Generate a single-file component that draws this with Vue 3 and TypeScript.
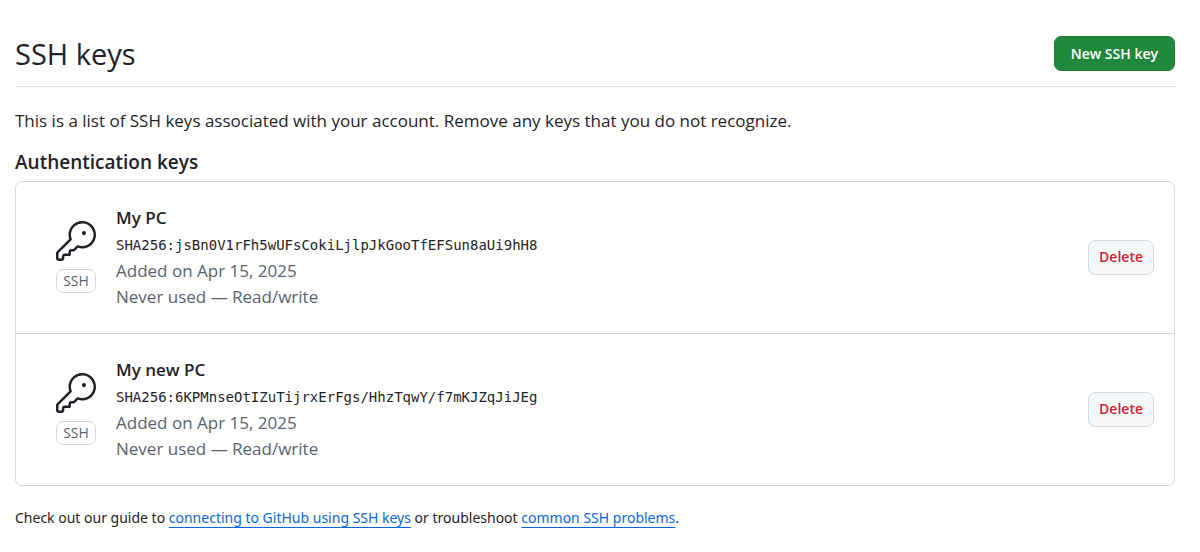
<script setup lang="ts">
interface SshKey {
  id: number
  title: string
  fingerprint: string
  added: string
  usage: string
}

const keys: SshKey[] = [
  {
    id: 1,
    title: 'My PC',
    fingerprint: 'SHA256:jsBn0V1rFh5wUFsCokiLjlpJkGooTfEFSun8aUi9hH8',
    added: 'Added on Apr 15, 2025',
    usage: 'Never used — Read/write',
  },
  {
    id: 2,
    title: 'My new PC',
    fingerprint: 'SHA256:6KPMnseOtIZuTijrxErFgs/HhzTqwY/f7mKJZqJiJEg',
    added: 'Added on Apr 15, 2025',
    usage: 'Never used — Read/write',
  },
]
</script>

<template>
  <main class="page">
    <header class="page-header">
      <h1>SSH keys</h1>
      <button type="button" class="btn btn-primary">New SSH key</button>
    </header>

    <p class="intro">This is a list of SSH keys associated with your account. Remove any keys that you do not recognize.</p>

    <h2>Authentication keys</h2>
    <ul class="key-list">
      <li v-for="key in keys" :key="key.id" class="key-row">
        <div class="key-kind">
          <svg viewBox="0 0 24 24" width="40" height="40" aria-hidden="true">
            <path d="M16.75 8.5a1.25 1.25 0 1 0 0-2.5 1.25 1.25 0 0 0 0 2.5Z" />
            <path d="M15.75 0a8.25 8.25 0 1 1-2.541 16.101l-1.636 1.636a1.744 1.744 0 0 1-1.237.513H9.25a.25.25 0 0 0-.25.25v1.448a.876.876 0 0 1-.256.619l-.214.213a.75.75 0 0 1-.545.22H5.25a.25.25 0 0 0-.25.25v1A1.75 1.75 0 0 1 3.25 24h-1.5A1.75 1.75 0 0 1 0 22.25v-2.836c0-.464.185-.908.513-1.236l7.386-7.388A8.249 8.249 0 0 1 15.75 0ZM9 8.25a6.733 6.733 0 0 0 .463 2.462.75.75 0 0 1-.168.804l-7.722 7.721a.25.25 0 0 0-.073.177v2.836c0 .138.112.25.25.25h1.5a.25.25 0 0 0 .25-.25v-1c0-.966.784-1.75 1.75-1.75H7.5v-1c0-.966.784-1.75 1.75-1.75h1.086a.25.25 0 0 0 .177-.073l1.971-1.972a.75.75 0 0 1 .804-.168A6.75 6.75 0 1 0 9 8.25Z" />
          </svg>
          <span class="badge">SSH</span>
        </div>
        <div class="key-info">
          <strong>{{ key.title }}</strong>
          <code>{{ key.fingerprint }}</code>
          <span class="muted">{{ key.added }}</span>
          <span class="muted">{{ key.usage }}</span>
        </div>
        <button type="button" class="btn btn-danger" :aria-label="`Delete ${key.title}`">Delete</button>
      </li>
    </ul>

    <p class="help">
      Check out our guide to <a href="#connecting">connecting to GitHub using SSH keys</a> or troubleshoot
      <a href="#problems">common SSH problems</a>.
    </p>
  </main>
</template>

<style>
body {
  margin: 0;
  background: #ffffff;
}
</style>

<style scoped>
.page {
  padding: 36px 25px 0 15px;
  color: #1f2328;
  font-family: "Open Sans", "Noto Sans", sans-serif;
  font-size: 17px;
  line-height: 26px;
}

.page-header {
  display: flex;
  align-items: flex-start;
  justify-content: space-between;
  padding-bottom: 15px;
  border-bottom: 1px solid #d9e1e8;
}

h1 {
  margin: 0;
  font-size: 29px;
  font-weight: 400;
  line-height: 35px;
}

h2 {
  margin: 15px 0 6px;
  font-size: 19px;
  font-weight: 600;
  line-height: 26px;
}

.intro {
  margin: 21px 0 0;
}

.btn {
  box-sizing: border-box;
  height: 35px;
  padding: 0 16px;
  border: 1px solid #d1d9e0;
  border-radius: 7px;
  font-family: inherit;
  font-size: 14px;
  font-weight: 600;
  line-height: 20px;
  white-space: nowrap;
  cursor: pointer;
}

.btn-primary {
  border-color: #1f7b38;
  background: #1f883d;
  color: #ffffff;
}

.btn-danger {
  padding: 0 10px;
  background: #f6f8fa;
  color: #d1242f;
}

.key-list {
  margin: 0;
  padding: 0;
  border: 1px solid #d1d9e0;
  border-radius: 7px;
  list-style: none;
}

.key-row {
  display: flex;
  align-items: center;
  padding: 22px 20px 23px 40px;
}

.key-row + .key-row {
  border-top: 1px solid #d1d9e0;
}

.key-kind {
  display: flex;
  flex-direction: column;
  align-items: center;
  gap: 8px;
  width: 40px;
  margin-right: 20px;
}

.key-kind svg {
  display: block;
  fill: #1f2328;
}

.badge {
  box-sizing: border-box;
  width: 40px;
  border: 1px solid #d1d9e0;
  border-radius: 7px;
  color: #59636e;
  font-size: 14px;
  line-height: 22px;
  text-align: center;
}

.key-info {
  display: flex;
  flex: 1;
  flex-direction: column;
  min-width: 0;
}

.key-info strong {
  font-weight: 600;
  line-height: 28px;
}

.key-info code {
  font-family: "DejaVu Sans Mono", "Liberation Mono", monospace;
  font-size: 14px;
  line-height: 26px;
  overflow-wrap: anywhere;
}

.muted {
  color: #59636e;
}

.help {
  margin: 20px 0 0;
  font-family: "Noto Sans", "Open Sans", sans-serif;
  font-size: 14px;
  line-height: 24px;
}

.help a {
  color: #0969da;
  text-decoration: underline;
  text-underline-offset: 4px;
}
</style>
